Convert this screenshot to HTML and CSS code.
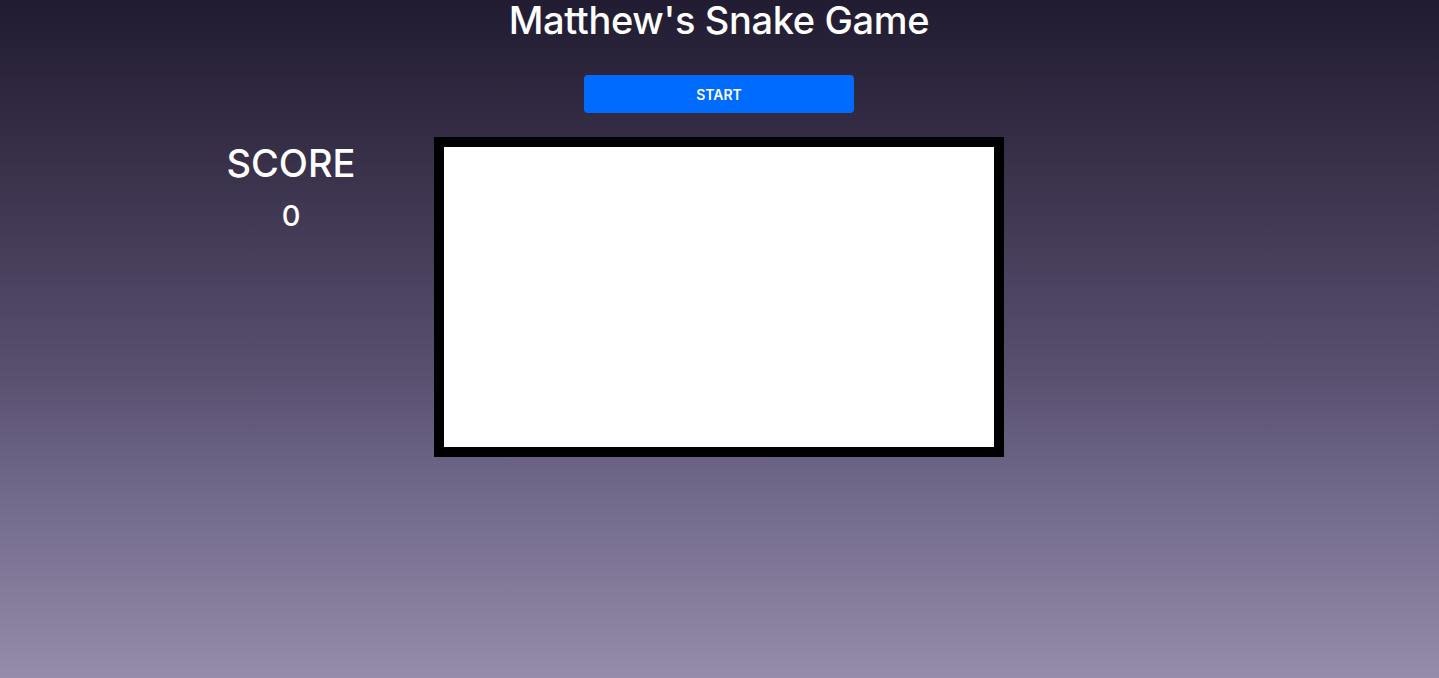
FILE: index.html
```html
<!DOCTYPE html>
<html lang="en">
<head>
<meta charset="utf-8">
<title>Matthew's Snake Game</title>
<link rel="stylesheet" href="styles.css">
</head>
<body>
<main class="page">
  <h1 class="title">Matthew's Snake Game</h1>
  <button class="start-btn" type="button">START</button>
  <section class="game">
    <div class="score">
      <div class="score-label">SCORE</div>
      <div class="score-value">0</div>
    </div>
    <div class="board"><div class="board-inner"></div></div>
    <div class="spacer"></div>
  </section>
</main>
</body>
</html>
```

FILE: styles.css
```css
html, body {
  margin: 0;
  padding: 0;
  height: 100%;
}
body {
  background: linear-gradient(180deg, #211c31 0%, #3a314b 25%, #595070 55%, #736b8b 74%, #958bab 100%);
  font-family: Inter, "Noto Sans", "Liberation Sans", sans-serif;
  color: #fff;
  overflow: hidden;
}
.page {
  display: flex;
  flex-direction: column;
  align-items: center;
  height: 100%;
  box-sizing: border-box;
  padding-right: 1px;
}
.title {
  margin: 0;
  padding-top: 2px;
  font-size: 38px;
  font-weight: 500;
  line-height: 36px;
  letter-spacing: -0.35px;
}
.start-btn {
  margin-top: 37px;
  width: 270px;
  height: 38px;
  border: none;
  border-radius: 4px;
  background: #006cff;
  color: #fff;
  font-family: Inter, "Noto Sans", "Liberation Sans", sans-serif;
  font-size: 14px;
  font-weight: 600;
  padding: 0;
}
.game {
  margin-top: 24px;
  width: 100%;
  display: grid;
  grid-template-columns: 1fr 570px 1fr;
  align-items: start;
}
.score {
  justify-self: end;
  width: 200px;
  margin-right: 43px;
  display: flex;
  flex-direction: column;
  align-items: center;
}
.score-label {
  font-size: 38px;
  font-weight: 500;
  line-height: 48px;
  margin-top: 2px;
}
.score-value {
  font-size: 29px;
  font-weight: 500;
  line-height: 36px;
  margin-top: 11px;
}
.board {
  width: 570px;
  height: 320px;
  box-sizing: border-box;
  border: 10px solid #000;
  background: #fff;
}
.board-inner {
  width: 100%;
  height: 100%;
}
```
